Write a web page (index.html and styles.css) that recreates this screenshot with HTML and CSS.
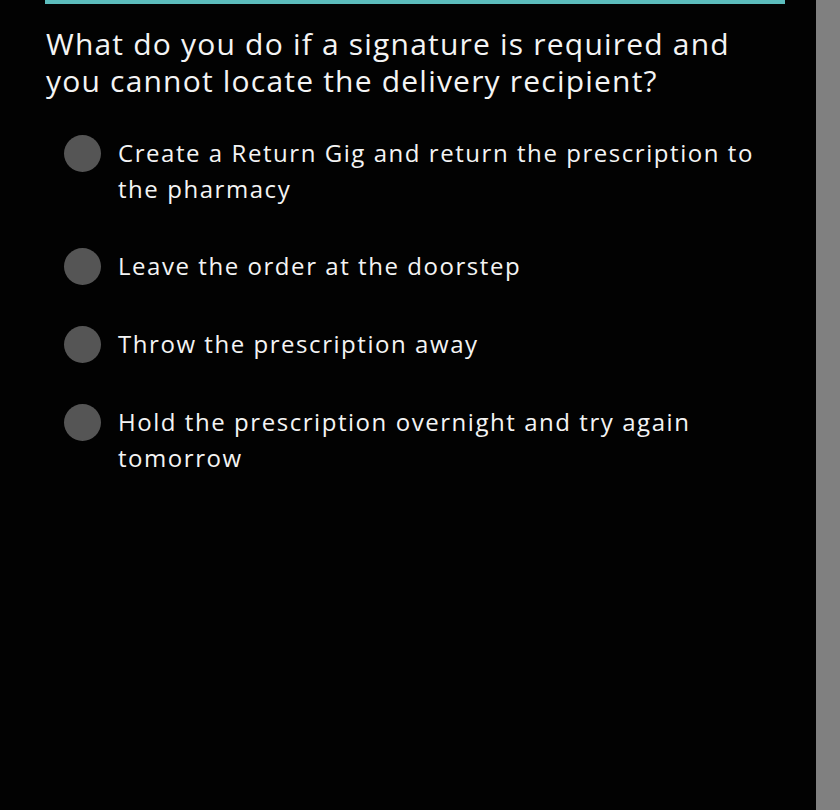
FILE: index.html
```html
<!DOCTYPE html>
<html lang="en">
<head>
  <meta charset="UTF-8" />
  <title>Quiz</title>
  <link rel="stylesheet" href="styles.css">
</head>
<body>
  <div class="page">
    <div class="quiz">
      <div class="progress"></div>
      <h1 class="question">What do you do if a signature is required and you cannot locate the delivery recipient?</h1>

      <ul class="answers">
        <li class="answer"><span class="radio"></span><span class="label">Create a Return Gig and return the prescription to the pharmacy</span></li>
        <li class="answer"><span class="radio"></span><span class="label">Leave the order at the doorstep</span></li>
        <li class="answer"><span class="radio"></span><span class="label">Throw the prescription away</span></li>
        <li class="answer"><span class="radio"></span><span class="label">Hold the prescription overnight and try again tomorrow</span></li>
      </ul>
    </div>
    <div class="scrollbar"></div>
  </div>
</body>
</html>
```

FILE: styles.css
```css
* { box-sizing: border-box; }
html, body {
  margin: 0;
  height: 100%;
}
body {
  background: #020202;
  color: #f4f4f4;
  font-family: 'Open Sans', sans-serif;
}
.page {
  display: flex;
  height: 810px;
}
.quiz {
  flex: 1;
  padding: 0 31px 0 45px;
}
.progress {
  height: 4px;
  background: #5cbdbd;
}
.question {
  font-size: 30px;
  font-weight: 400;
  line-height: 37px;
  letter-spacing: 1.2px;
  margin: 21px 0 0 1px;
}
.answers {
  list-style: none;
  margin: 36px 0 0;
  padding: 0 0 0 19px;
}
.answer {
  display: flex;
  align-items: flex-start;
  margin-bottom: 41px;
}
.radio {
  flex: none;
  width: 37px;
  height: 37px;
  border-radius: 50%;
  background: #555;
  margin-right: 17px;
}
.label {
  font-size: 24px;
  line-height: 36px;
  letter-spacing: 1.55px;
}
.scrollbar {
  width: 24px;
  background: #808080;
}
```
